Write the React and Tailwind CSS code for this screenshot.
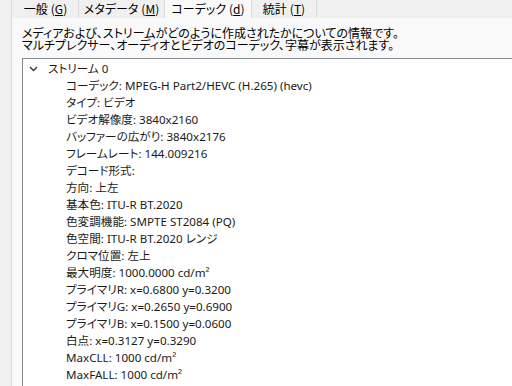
const tabs = [
  { label: "一般", key: "G", w: "w-[66px]" },
  { label: "メタデータ", key: "M", w: "w-[86px]" },
  { label: "コーデック", key: "d", w: "w-[87px]", active: true },
  { label: "統計", key: "T", w: "w-[65px]" },
];

const rows = [
  "コーデック: MPEG-H Part2/HEVC (H.265) (hevc)",
  "タイプ: ビデオ",
  "ビデオ解像度: 3840x2160",
  "バッファーの広がり: 3840x2176",
  "フレームレート: 144.009216",
  "デコード形式:",
  "方向: 上左",
  "基本色: ITU-R BT.2020",
  "色変調機能: SMPTE ST2084 (PQ)",
  "色空間: ITU-R BT.2020 レンジ",
  "クロマ位置: 左上",
  "最大明度: 1000.0000 cd/m²",
  "プライマリR: x=0.6800 y=0.3200",
  "プライマリG: x=0.2650 y=0.6900",
  "プライマリB: x=0.1500 y=0.0600",
  "白点: x=0.3127 y=0.3290",
  "MaxCLL: 1000 cd/m²",
  "MaxFALL: 1000 cd/m²",
];

function Chevron() {
  return (
    <svg width="9" height="6" viewBox="0 0 9 6" className="shrink-0">
      <path d="M1 1 L4.5 4.5 L8 1" fill="none" stroke="#333" strokeWidth="1.4" />
    </svg>
  );
}

export default function App() {
  return (
    <div
      className="w-[512px] h-[386px] overflow-hidden flex bg-[#f0f0f0] text-[11.6px] text-[#1a1a1a] [font-feature-settings:'palt']"
      style={{ fontFamily: '"Noto Sans", "Noto Sans CJK JP", sans-serif' }}
    >
      <div className="w-[12px] shrink-0 border-r border-[#dadada]" />
      <div className="flex-1 flex flex-col min-w-0">
        <div className="h-[18px] shrink-0 flex pl-[1px]">
          {tabs.map(t => (
            <div
              key={t.key}
              className={`${t.w} h-full flex items-center justify-center gap-[3px] border-r border-[#d9d9d9] leading-none text-[12px] text-black ${
                t.active ? "bg-[#f9f9f9]" : "bg-[#f0f0f0]"
              }`}
              style={{ fontFamily: '"Noto Sans CJK JP", sans-serif' }}
            >
              <span>{t.label}</span>
              <span>(<u className="underline-offset-1">{t.key}</u>)</span>
            </div>
          ))}
        </div>
        <div className="flex-1 bg-[#f9f9f9] pl-[10px] pt-[9px] flex flex-col min-h-0">
          <div
            className="leading-[12px] text-[12px] text-black"
            style={{ fontFamily: '"Noto Sans CJK JP", sans-serif' }}
          >
            <div>メディアおよび、ストリームがどのように作成されたかについての情報です。</div>
            <div>マルチプレクサー、オーディオとビデオのコーデック、字幕が表示されます。</div>
          </div>
          <div className="mt-[7px] flex-1 bg-white border-t border-l border-[#828790] pt-[1px] overflow-hidden">
            <div className="h-[17px] flex items-center pl-[6px] gap-[10px]">
              <Chevron />
              <span>ストリーム 0</span>
            </div>
            {rows.map(r => (
              <div key={r} className="h-[17px] leading-[17px] pl-[43px] whitespace-nowrap">
                {r}
              </div>
            ))}
            <div className="h-[17px] leading-[17px] pl-[31px] whitespace-nowrap">オーディオ</div>
          </div>
        </div>
      </div>
    </div>
  );
}
